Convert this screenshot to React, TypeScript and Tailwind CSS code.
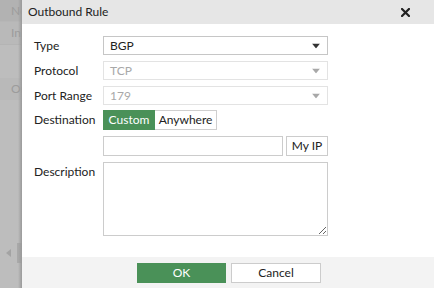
import React from "react";

function Caret({ disabled }: { disabled?: boolean }) {
  return (
    <svg width="8" height="5" viewBox="0 0 8 5" className="absolute right-[7px] top-1/2 -translate-y-1/2">
      <polygon points="0,0 8,0 4,5" fill={disabled ? "#a8a8a8" : "#333333"} />
    </svg>
  );
}

function SelectBox({ value, disabled }: { value: string; disabled?: boolean }) {
  return (
    <div
      className={`relative w-[225px] h-[19px] border flex items-center pl-[6px] text-[12px] ${
        disabled ? "border-[#e3e3e3] text-[#a8a8a8]" : "border-[#c6c6c6] text-[#222]"
      }`}
    >
      {value}
      <Caret disabled={disabled} />
    </div>
  );
}

export default function App() {
  return (
    <div
      className="flex w-[434px] h-[288px] overflow-hidden bg-white"
      style={{ fontFamily: "Lato, 'Open Sans', sans-serif" }}
    >
      {/* background page, dimmed */}
      <div className="w-[22px] shrink-0 h-full bg-[#bdbdbd] flex flex-col text-[12px] text-[#9c9c9c] relative overflow-hidden whitespace-nowrap">
        <div className="h-[22px] bg-[#b2b2b2] flex items-center pl-[11px] border-b border-[#b6b6b6]">Network</div>
        <div className="h-[23px] bg-[#b9b9b9] flex items-center pl-[11px] border-b border-[#b4b4b4]">Inbound</div>
        <div className="h-[33px]" />
        <div className="h-[22px] bg-[#b9b9b9] flex items-center pl-[11px]">Outbound</div>
        <div className="flex-1" />
        <div className="h-[20px] flex items-center mb-[25px]">
          <svg width="5" height="8" viewBox="0 0 5 8" className="ml-[6px] shrink-0">
            <polygon points="5,0 5,8 0,4" fill="#a3a3a3" />
          </svg>
          <div className="ml-auto w-[5px] h-[20px] bg-[#a9a9a9] shrink-0" />
        </div>
        <div className="absolute right-0 top-0 h-full w-[4px] bg-gradient-to-r from-transparent to-[#9a9a9a]" />
      </div>

      {/* dialog */}
      <div className="flex-1 flex flex-col h-full text-[#333] min-w-0">
        <div className="h-[24px] bg-[#e6e6e6] flex items-center justify-between pl-[6px] pr-[24px] text-[12px] text-[#222]">
          <span>Outbound Rule</span>
          <svg width="9" height="9" viewBox="0 0 9 9">
            <path d="M1 1 L8 8 M8 1 L1 8" stroke="#222" strokeWidth="2.2" strokeLinecap="square" />
          </svg>
        </div>

        <div className="flex-1 pl-[12px] pt-[12px] text-[12px]">
          <div className="flex items-center h-[19px]">
            <div className="w-[69px] text-[#222]">Type</div>
            <SelectBox value="BGP" />
          </div>
          <div className="flex items-center h-[19px] mt-[6px]">
            <div className="w-[69px] text-[#222]">Protocol</div>
            <SelectBox value="TCP" disabled />
          </div>
          <div className="flex items-center h-[19px] mt-[6px]">
            <div className="w-[69px] text-[#222]">Port Range</div>
            <SelectBox value="179" disabled />
          </div>
          <div className="flex items-center h-[20px] mt-[5px]">
            <div className="w-[69px] text-[#222]">Destination</div>
            <div className="flex h-[20px]">
              <div className="w-[52px] bg-[#4a9158] text-white flex items-center justify-center">Custom</div>
              <div className="w-[62px] border border-l-0 border-[#cfcfcf] text-[#222] flex items-center justify-center">
                Anywhere
              </div>
            </div>
          </div>
          <div className="flex items-center h-[20px] mt-[6px]">
            <div className="w-[69px]" />
            <div className="w-[180px] h-[20px] border border-[#cccccc]" />
            <div className="ml-[3px] w-[42px] h-[20px] border border-[#cccccc] flex items-center justify-center text-[#222]">
              My IP
            </div>
          </div>
          <div className="flex items-start mt-[6px]">
            <div className="w-[69px] text-[#222] pt-[1px]">Description</div>
            <textarea className="w-[225px] h-[74px] border border-[#cccccc] outline-none" />
          </div>
        </div>

        <div className="h-[31px] bg-[#f3f3f3] flex items-center pl-[115px] text-[12px]">
          <div className="w-[89px] h-[20px] bg-[#4a9158] text-white flex items-center justify-center">OK</div>
          <div className="ml-[5px] w-[90px] h-[20px] bg-white border border-[#cccccc] text-[#222] flex items-center justify-center">
            Cancel
          </div>
        </div>
      </div>
    </div>
  );
}
